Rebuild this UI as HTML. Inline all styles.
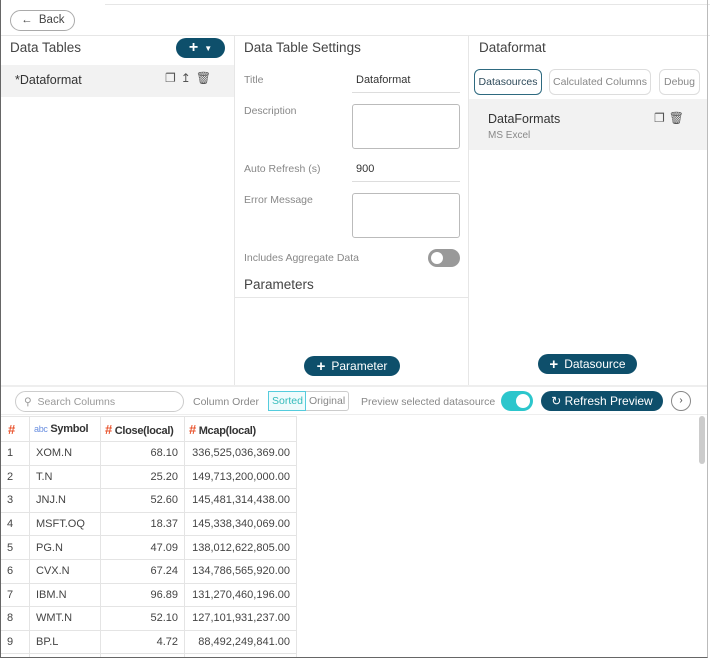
<!DOCTYPE html>
<html style="overflow:hidden;height:659px"><head><style>
*{box-sizing:border-box;margin:0;padding:0}
body{width:710px;height:659px;background:#fff;font-family:"Liberation Sans",sans-serif;color:#444;position:relative;overflow:hidden}
.a{position:absolute}
.btn{position:absolute;background:#0e4f6b;color:#fff;border-radius:11px;font-size:12px;display:flex;align-items:center;justify-content:center;gap:6px}
.lbl{position:absolute;font-size:10.5px;color:#888}
.ta{position:absolute;border:1px solid #bbb;border-radius:3px;width:108px;height:45px;left:352px}
.ul{position:absolute;left:352px;width:108px;border-bottom:1px solid #ddd;font-size:11px;color:#333;padding:0 0 6px 4px}
.h{position:absolute;font-size:13.5px;color:#444}
.tw{position:absolute;left:0;top:416px;width:300px;height:241px;overflow:hidden}
table{border-collapse:collapse;font-size:11px;color:#444;table-layout:fixed;width:296px}
td{height:23.6px;border:1px solid #e4e4e4;padding:0 6px;white-space:nowrap}
th{height:25px;border:1px solid #e4e4e4;font-size:11px;font-weight:bold;color:#333;padding:0 4px;text-align:left;white-space:nowrap;letter-spacing:-0.3px}
.o{color:#e9552f;font-size:13px}
.r{text-align:right}
.tab{position:absolute;top:69px;height:26px;border:1px solid #ddd;border-radius:6px;font-size:10.5px;color:#888;display:flex;align-items:center;justify-content:center}
</style></head><body>
<div class="a" style="left:105px;top:4px;width:605px;border-top:1px solid #e6e6e6"></div>
<div class="a" style="left:10px;top:10px;width:65px;height:21px;border:1px solid #aaa;border-radius:11px;font-size:11.5px;color:#444;padding:3px 0 0 10px">&#8592;&nbsp; Back</div>
<div class="a" style="left:0;top:35px;width:710px;border-top:1px solid #e6e6e6"></div>
<div class="a" style="left:234px;top:35px;height:350px;border-left:1px solid #e6e6e6"></div>
<div class="a" style="left:468px;top:35px;height:350px;border-left:1px solid #e6e6e6"></div>
<div class="a" style="left:0;top:385px;width:707px;border-top:2px solid #eee"></div>
<div class="h" style="left:10px;top:40px">Data Tables</div>
<div class="btn" style="left:176px;top:38px;width:49px;height:20px;font-size:16px;font-weight:bold">+ <span style="font-size:8px">&#9660;</span></div>
<div class="a" style="left:0;top:65px;width:234px;height:32px;background:#f2f2f2"></div>
<div class="a" style="left:15px;top:73px;font-size:12.5px;color:#333">*Dataformat</div>
<div class="a" style="left:165px;top:71px;font-size:12px;color:#555;letter-spacing:5px">&#10064;&#8613;&#128465;</div>
<div class="h" style="left:244px;top:40px">Data Table Settings</div>
<div class="lbl" style="left:244px;top:74px">Title</div>
<div class="ul" style="top:74px">Dataformat</div>
<div class="lbl" style="left:244px;top:105px">Description</div>
<div class="ta" style="top:104px"></div>
<div class="lbl" style="left:244px;top:163px">Auto Refresh (s)</div>
<div class="ul" style="top:163px">900</div>
<div class="lbl" style="left:244px;top:194px">Error Message</div>
<div class="ta" style="top:193px"></div>
<div class="lbl" style="left:244px;top:252px">Includes Aggregate Data</div>
<div class="a" style="left:428px;top:249px;width:32px;height:18px;border-radius:9px;background:#999"><div class="a" style="left:3px;top:3px;width:12px;height:12px;border-radius:6px;background:#fff"></div></div>
<div class="h" style="left:244px;top:277px">Parameters</div>
<div class="a" style="left:234px;top:297px;width:234px;border-top:1px solid #e6e6e6"></div>
<div class="btn" style="left:304px;top:356px;width:96px;height:20px"><b style="font-size:15px">+</b> Parameter</div>
<div class="h" style="left:479px;top:40px">Dataformat</div>
<div class="tab" style="left:474px;top:69px;width:68px;border-color:#2e6a80;color:#2e4a5a">Datasources</div>
<div class="tab" style="left:549px;width:102px">Calculated Columns</div>
<div class="tab" style="left:659px;width:41px">Debug</div>
<div class="a" style="left:469px;top:99px;width:238px;height:51px;background:#f2f2f2"></div>
<div class="a" style="left:488px;top:112px;font-size:12.5px;color:#333">DataFormats</div>
<div class="a" style="left:488px;top:130px;font-size:10px;color:#888">MS Excel</div>
<div class="a" style="left:654px;top:111px;font-size:12px;color:#555;letter-spacing:4px">&#10064;&#128465;</div>
<div class="btn" style="left:538px;top:354px;width:99px;height:20px"><b style="font-size:15px">+</b> Datasource</div>
<div class="a" style="left:15px;top:391px;width:169px;height:21px;border:1px solid #ccc;border-radius:11px;font-size:10.5px;color:#999;padding:4px 0 0 8px">&#9906; &nbsp;Search Columns</div>
<div class="lbl" style="left:193px;top:396px">Column Order</div>
<div class="a" style="left:268px;top:391px;width:81px;height:20px;border:1px solid #ccc;border-radius:3px;font-size:10.5px;color:#888"><span class="a" style="left:-1px;top:-1px;width:38px;height:20px;border:1px solid #5cd;background:#effbfc;color:#3bb;padding:3px 0 0 3px">Sorted</span><span class="a" style="left:40px;top:3px">Original</span></div>
<div class="lbl" style="left:361px;top:396px">Preview selected datasource</div>
<div class="a" style="left:501px;top:391px;width:32px;height:20px;border-radius:10px;background:#2cc6cc"><div class="a" style="left:15px;top:3px;width:14px;height:14px;border-radius:7px;background:#fff"></div></div>
<div class="btn" style="left:541px;top:391px;width:122px;height:20px">&#8635; Refresh Preview</div>
<div class="a" style="left:671px;top:391px;width:20px;height:20px;border:1px solid #888;border-radius:10px;font-size:10px;text-align:center;line-height:18px">&#8250;</div>
<div class="a" style="left:0;top:414px;width:707px;border-top:1px solid #eee"></div>
<div class="a" style="left:699px;top:416px;width:6px;height:48px;background:#ccc;border-radius:3px"></div>
<div class="tw"><table>
<colgroup><col style="width:29px"><col style="width:71px"><col style="width:84px"><col style="width:112px"></colgroup>
<tr><th class="o" style="padding-left:7px">#</th><th><span style="color:#6a8fe0;font-weight:normal;font-size:9px">abc</span> Symbol</th><th><span class="o">#</span> Close(local)</th><th><span class="o">#</span> Mcap(local)</th></tr>
<tr><td>1</td><td>XOM.N</td><td class="r">68.10</td><td class="r">336,525,036,369.00</td></tr>
<tr><td>2</td><td>T.N</td><td class="r">25.20</td><td class="r">149,713,200,000.00</td></tr>
<tr><td>3</td><td>JNJ.N</td><td class="r">52.60</td><td class="r">145,481,314,438.00</td></tr>
<tr><td>4</td><td>MSFT.OQ</td><td class="r">18.37</td><td class="r">145,338,340,069.00</td></tr>
<tr><td>5</td><td>PG.N</td><td class="r">47.09</td><td class="r">138,012,622,805.00</td></tr>
<tr><td>6</td><td>CVX.N</td><td class="r">67.24</td><td class="r">134,786,565,920.00</td></tr>
<tr><td>7</td><td>IBM.N</td><td class="r">96.89</td><td class="r">131,270,460,196.00</td></tr>
<tr><td>8</td><td>WMT.N</td><td class="r">52.10</td><td class="r">127,101,931,237.00</td></tr>
<tr><td>9</td><td>BP.L</td><td class="r">4.72</td><td class="r">88,492,249,841.00</td></tr>
<tr><td></td><td></td><td></td><td></td></tr>
</table></div>
<div class="a" style="left:0;top:0;width:708px;height:658px;border-left:1px solid #666;border-bottom:1px solid #666;border-right:1px solid #bbb;pointer-events:none"></div>
</body></html>
